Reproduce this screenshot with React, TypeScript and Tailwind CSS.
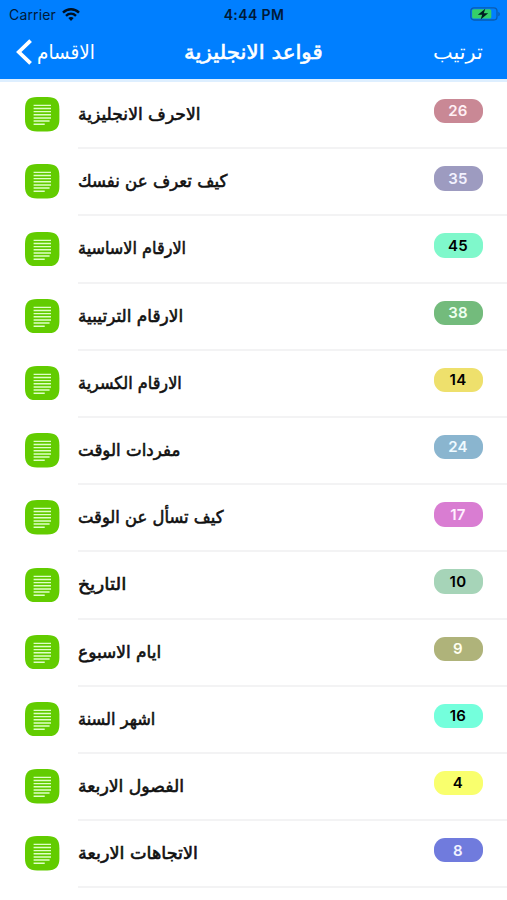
import React, { useLayoutEffect, useRef, useState } from 'react';
import clsx from 'clsx';

interface Lesson {
  title: string;
  width: number;
  count: number;
  badge: string;
}

const lessons: Lesson[] = [
  { title: 'الاحرف الانجليزية', width: 122.5, count: 26, badge: 'bg-[#c98895] text-[#fff0f4]' },
  { title: 'كيف تعرف عن نفسك', width: 149, count: 35, badge: 'bg-[#9d9bc0] text-[#f3f2ff]' },
  { title: 'الارقام الاساسية', width: 108.5, count: 45, badge: 'bg-[#7ff8cb] text-black' },
  { title: 'الارقام الترتيبية', width: 105.5, count: 38, badge: 'bg-[#73bb7c] text-[#effff0]' },
  { title: 'الارقام الكسرية', width: 104, count: 14, badge: 'bg-[#eee06c] text-black' },
  { title: 'مفردات الوقت', width: 102, count: 24, badge: 'bg-[#8ab5cf] text-[#effaff]' },
  { title: 'كيف تسأل عن الوقت', width: 146, count: 17, badge: 'bg-[#d97dd2] text-[#fff0ff]' },
  { title: 'التاريخ', width: 48, count: 10, badge: 'bg-[#a6d4b8] text-black' },
  { title: 'ايام الاسبوع', width: 83.5, count: 9, badge: 'bg-[#afb37a] text-[#fffff0]' },
  { title: 'اشهر السنة', width: 77, count: 16, badge: 'bg-[#74ffdc] text-black' },
  { title: 'الفصول الاربعة', width: 106.5, count: 4, badge: 'bg-[#f9ff6d] text-black' },
  { title: 'الاتجاهات الاربعة', width: 120, count: 8, badge: 'bg-[#707bdd] text-[#f2f3ff]' },
];

// Squeezes an Arabic label horizontally to the given width
const FitText: React.FC<{ text: string; width: number; className?: string }> = ({ text, width, className }) => {
  const ref = useRef<HTMLSpanElement>(null);
  const [scale, setScale] = useState(1);

  useLayoutEffect(() => {
    if (ref.current) {
      setScale(width / ref.current.offsetWidth);
    }
  }, [text, width]);

  return (
    <span dir="ltr" className="flex" style={{ width }}>
      <span
        ref={ref}
        dir="rtl"
        className={clsx('shrink-0 origin-left whitespace-nowrap', className)}
        style={{ transform: `scaleX(${scale})` }}
      >
        {text}
      </span>
    </span>
  );
};

const NoteIcon: React.FC = () => (
  <svg viewBox="0 0 34 34" className="size-[34.4px] shrink-0">
    <path
      d="M12 0H22C30.5 0 34 3.5 34 12V22C34 30.5 30.5 34 22 34H12C3.5 34 0 30.5 0 22V12C0 3.5 3.5 0 12 0Z"
      fill="#62cc00"
    />
    <path
      d="M8.5 8.3h17.2M8.5 11.4h17.2M8.5 14.5h17.2M8.5 17.6h17.2M8.5 20.7h17.2M8.5 23.8h15.8M8.5 26.9h11"
      stroke="#dfffc8"
      strokeWidth="1.4"
    />
  </svg>
);

const StatusBar: React.FC = () => (
  <div className="grid h-7 grid-cols-3 items-center pl-[9px] pr-[8px] font-[Inter,sans-serif] text-[14px] text-[#001a38]">
    <div className="flex items-center gap-[6px]">
      <span className="tracking-[0.15px]">Carrier</span>
      <svg viewBox="0 0 18 13" className="h-[13px] w-[18px]" fill="none" stroke="#001020" strokeWidth="2.4">
        <path d="M1 4.6C5.5.2 12.5.2 17 4.6" />
        <path d="M4 7.8c2.9-2.7 7.1-2.7 10 0" />
        <path d="M6.3 10.1c1.6-1.5 3.8-1.5 5.4 0L9 13Z" fill="#001020" stroke="none" />
      </svg>
    </div>
    <span className="text-center font-semibold tracking-[0.4px]">4:44 PM</span>
    <svg viewBox="0 0 31 14" className="-mr-[2px] h-[14px] w-[31px] justify-self-end">
      <rect x=".8" y=".8" width="26.2" height="12.2" rx="3.2" fill="none" stroke="#0a5cb0" strokeWidth="1.3" />
      <rect x="2.1" y="2.2" width="19.2" height="9.4" rx="1.6" fill="#35cf69" />
      <path d="M28.3 4.7v4.6c2-.8 2-3.8 0-4.6Z" fill="#0a5cb0" />
      <path d="M15.3 1.8 7.8 7.8h4.4L10.6 12.4l7.6-6.2h-4.4Z" fill="#001d22" />
    </svg>
  </div>
);

const App: React.FC = () => {
  return (
    <div className="h-[900px] w-[507px] overflow-hidden bg-white font-['DejaVu_Sans',sans-serif]">
      <header className="h-[82px] border-b-[3px] border-[#deefff] bg-[#007fff] text-white">
        <StatusBar />
        <nav className="flex h-[48px] items-center justify-between pl-[16px] pr-[24px]">
          <button className="flex items-center gap-[5px]">
            <svg viewBox="0 0 16 26" className="h-[26px] w-[16px]" fill="none" stroke="white" strokeWidth="3.8">
              <path d="M14.6 1.6 2.8 13l11.8 11.4" />
            </svg>
            <FitText text="الاقسام" width={58} className="text-[20px]" />
          </button>
          <h1 className="ml-[3px]">
            <FitText
              text="قواعد الانجليزية"
              width={139}
              className="text-[20px] font-normal [-webkit-text-stroke:0.6px_white]"
            />
          </h1>
          <button className="ml-[25px]">
            <FitText text="ترتيب" width={50} className="text-[20px]" />
          </button>
        </nav>
      </header>

      <ul>
        {lessons.map((lesson) => (
          <li key={lesson.title} className="flex h-[67.2px] pl-[25.3px]">
            <div className="flex w-[52.7px] shrink-0 pt-[15.3px]">
              <NoteIcon />
            </div>
            <div className="flex flex-1 items-start justify-between border-b-2 border-[#f3f3f4] pr-[24.5px]">
              <FitText
                text={lesson.title}
                width={lesson.width}
                className="mt-[18px] text-[17.5px] leading-[28px] text-[#111] [-webkit-text-stroke:0.6px_#111]"
              />
              <span
                className={clsx(
                  'mt-[17px] flex h-[24.4px] w-[49px] items-center justify-center rounded-[11px] pt-px font-[Inter,sans-serif] text-[15px] font-semibold tracking-[0.3px]',
                  lesson.badge,
                )}
              >
                {lesson.count}
              </span>
            </div>
          </li>
        ))}
      </ul>
    </div>
  );
};

export default App;
